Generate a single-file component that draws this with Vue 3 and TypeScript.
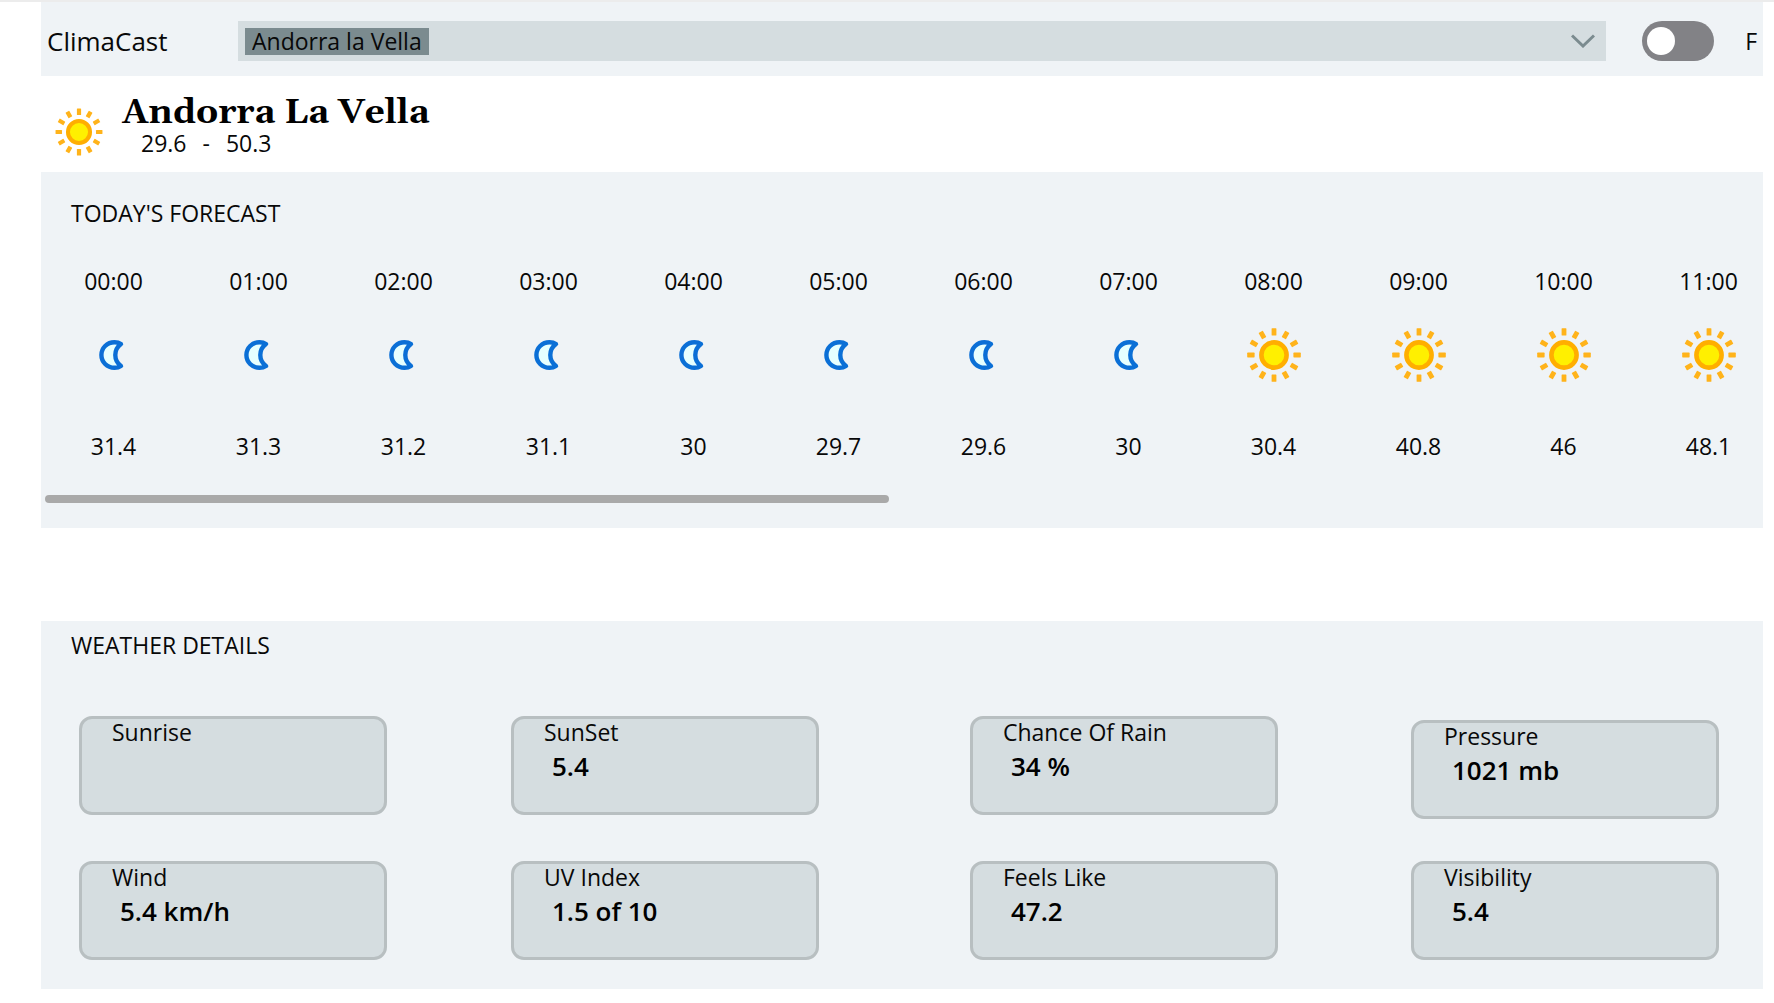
<script setup lang="ts">
import { ref } from 'vue'

interface Hour {
  time: string
  temp: string
  day: boolean
}

interface Detail {
  label: string
  value: string
}

const cities = ['Andorra la Vella']
const city = ref(cities[0])
const celsius = ref(false)

const temps = ['31.4', '31.3', '31.2', '31.1', '30', '29.7', '29.6', '30', '30.4', '40.8', '46', '48.1']
const hours: Hour[] = temps.map((temp, i) => ({
  time: `${String(i).padStart(2, '0')}:00`,
  temp,
  day: i >= 8,
}))

const columns: Detail[][] = [
  [
    { label: 'Sunrise', value: '' },
    { label: 'Wind', value: '5.4 km/h' },
  ],
  [
    { label: 'SunSet', value: '5.4' },
    { label: 'UV Index', value: '1.5 of 10' },
  ],
  [
    { label: 'Chance Of Rain', value: '34 %' },
    { label: 'Feels Like', value: '47.2' },
  ],
  [
    { label: 'Pressure', value: '1021 mb' },
    { label: 'Visibility', value: '5.4' },
  ],
]

const rays = Array.from({ length: 12 }, (_, i) => i * 30)
</script>

<template>
  <div class="page">
    <header class="topbar">
      <span class="brand">ClimaCast</span>
      <label class="picker">
        <select v-model="city" class="city-select" aria-label="City">
          <option v-for="c in cities" :key="c" :value="c">{{ c }}</option>
        </select>
        <svg class="chevron" viewBox="0 0 24 14" aria-hidden="true">
          <path d="M1 1.5 L12 12 L23 1.5" fill="none" stroke="#7b8b8f" stroke-width="3" />
        </svg>
      </label>
      <label class="unit">
        <input v-model="celsius" class="toggle" type="checkbox" role="switch" />
        <span>F</span>
      </label>
    </header>

    <section class="current">
      <svg class="current-icon" viewBox="-32 -32 64 64" aria-hidden="true">
        <circle r="12.6" fill="#fff000" stroke="#ffae00" stroke-width="4.6" />
        <rect v-for="a in rays" :key="a" x="-2.4" y="-26.8" width="4.8" height="7.4" rx="0.6" fill="#ffb31a" :transform="`rotate(${a})`" />
      </svg>
      <div>
        <h1 class="city">Andorra La Vella</h1>
        <p class="range"><span>29.6</span><span>-</span><span>50.3</span></p>
      </div>
    </section>

    <section class="panel forecast">
      <h2 class="panel-title">TODAY'S FORECAST</h2>
      <ul class="hours">
        <li v-for="h in hours" :key="h.time" class="hour">
          <span>{{ h.time }}</span>
          <svg v-if="h.day" class="hour-icon" viewBox="-32 -32 64 64" aria-hidden="true">
            <circle r="12.6" fill="#fff000" stroke="#ffae00" stroke-width="4.6" />
            <rect v-for="a in rays" :key="a" x="-2.4" y="-26.8" width="4.8" height="7.4" rx="0.6" fill="#ffb31a" :transform="`rotate(${a})`" />
          </svg>
          <svg v-else class="hour-icon" viewBox="-32 -32 64 64" aria-hidden="true">
            <path
              d="M7 -11 C5 -12.4 2.5 -12.8 0.5 -12.8 C-7 -12.8 -12.6 -7 -12.6 0 C-12.6 7 -7 12.8 0.5 12.8 C2.5 12.8 5 12.4 7 11 C-0.6 5.5 -0.6 -5.5 7 -11 Z"
              fill="#e6ffff"
              stroke="#0b6fd6"
              stroke-width="4.4"
              stroke-linejoin="round"
            />
          </svg>
          <span>{{ h.temp }}</span>
        </li>
      </ul>
      <div class="scroll-thumb"></div>
    </section>

    <section class="panel details">
      <h2 class="panel-title">WEATHER DETAILS</h2>
      <div class="columns">
        <div v-for="(col, i) in columns" :key="i" class="column">
          <article v-for="d in col" :key="d.label" class="card">
            <h3 class="card-label">{{ d.label }}</h3>
            <p class="card-value">{{ d.value }}</p>
          </article>
        </div>
      </div>
    </section>
  </div>
</template>

<style>
body {
  margin: 0;
  background: #fff;
}
</style>

<style scoped>
.page {
  border-top: 2px solid #ececec;
  padding: 0 11px 14px 41px;
  font-family: 'Open Sans', 'Noto Sans', sans-serif;
  font-size: 23px;
  line-height: 32px;
  color: #080808;
}

h1,
h2,
h3,
p,
ul {
  margin: 0;
  padding: 0;
  font-weight: 400;
}

.topbar {
  display: flex;
  align-items: center;
  box-sizing: border-box;
  height: 74px;
  padding: 4px 6px 0;
  background: #eff3f6;
}

.brand {
  width: 191px;
  flex: none;
  font-size: 26px;
}

.picker {
  flex: 1;
  display: flex;
  align-items: center;
  justify-content: space-between;
  height: 40px;
  padding: 0 11px 0 7px;
  background: #d5dde0;
}

.city-select {
  appearance: none;
  field-sizing: content;
  height: 27px;
  border: 0;
  border-radius: 0;
  padding: 0 7px;
  background: #7b8b8f;
  color: #080808;
  font: inherit;
  line-height: 26px;
}

.chevron {
  width: 24px;
  height: 14px;
}

.unit {
  display: flex;
  align-items: center;
  gap: 31px;
  margin-left: 36px;
}

.toggle {
  appearance: none;
  display: flex;
  align-items: center;
  box-sizing: border-box;
  width: 72px;
  height: 40px;
  margin: 0;
  padding: 0 5px;
  border-radius: 20px;
  background: #828286;
}

.toggle::before {
  content: '';
  width: 28px;
  height: 28px;
  border-radius: 50%;
  background: #fff;
}

.toggle:checked {
  justify-content: flex-end;
}

.current {
  display: flex;
  align-items: flex-start;
  gap: 15px;
  box-sizing: border-box;
  height: 96px;
  padding: 19px 10px 0;
}

.current-icon {
  width: 56px;
  height: 56px;
  margin-top: 9px;
}

.city {
  font-family: Georgia, Gelasio, 'DejaVu Serif', serif;
  font-size: 35px;
  font-weight: 700;
  line-height: 36px;
  color: #000;
}

.range {
  display: flex;
  gap: 16px;
  padding-left: 19px;
  line-height: 24px;
}

.panel {
  background: #eff3f6;
}

.panel-title {
  padding-left: 30px;
  font-size: 23px;
}

.forecast {
  padding: 25px 0;
}

.hours {
  display: flex;
  margin-top: 36px;
  overflow: hidden;
  list-style: none;
}

.hour {
  flex: none;
  display: flex;
  flex-direction: column;
  align-items: center;
  width: 145px;
}

.hour-icon {
  width: 64px;
  height: 64px;
  margin: 26px 0 43px;
}

.scroll-thumb {
  width: 49%;
  height: 8px;
  margin: 33px 0 0 4px;
  border-radius: 4px;
  background: #a9a9a9;
}

.details {
  margin-top: 93px;
  padding: 8px 0 29px;
}

.columns {
  display: grid;
  grid-template-columns: 432fr 459fr 441fr 352fr;
  margin-top: 55px;
  padding-left: 38px;
}

.column {
  display: flex;
  flex-direction: column;
  justify-content: flex-end;
  gap: 46px;
}

.column:last-child {
  gap: 42px;
}

.card {
  box-sizing: border-box;
  width: 308px;
  height: 99px;
  padding-left: 30px;
  border: 3px solid #b8bfc1;
  border-radius: 13px;
  background: #d5dde0;
}

.card-label {
  font-size: 23px;
  line-height: 26px;
}

.card-value {
  margin-top: 3px;
  padding-left: 8px;
  font-size: 26px;
  font-weight: 600;
  line-height: 36px;
  color: #000;
}
</style>
